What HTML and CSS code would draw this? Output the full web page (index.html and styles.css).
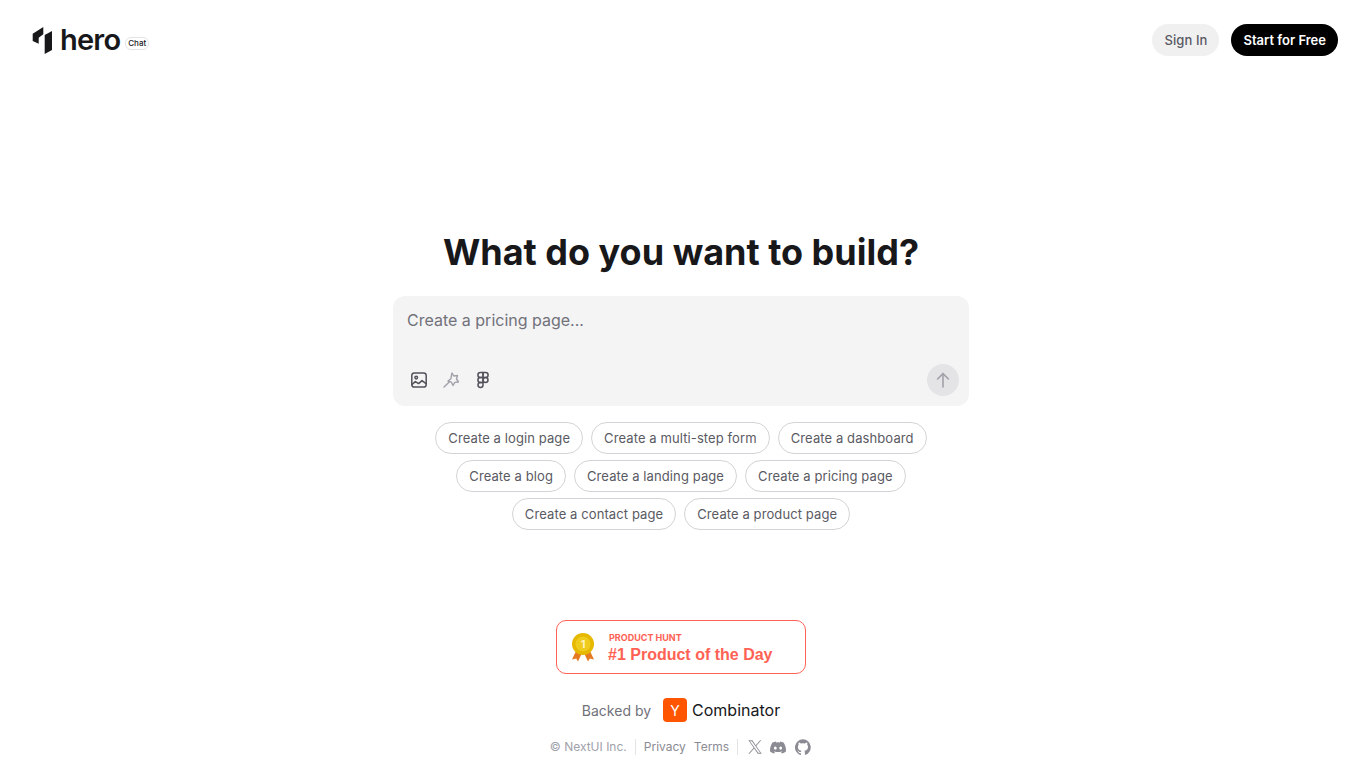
FILE: index.html
```html
<!DOCTYPE html>
<html lang="en">

<head>
    <meta charset="UTF-8">
    <meta name="viewport" content="width=device-width, initial-scale=1.0">
    <title>Hero Chat</title>
    <link rel="stylesheet" href="styles.css">
</head>

<body>

    <header class="top-bar">
        <a class="brand" href="#">
            <svg class="brand-mark" width="20" height="27" viewBox="0 0 20 27" fill="#18181b">
                <path d="M0.700 6.700 11.300 0V7.300L6.700 10.700V16.700L0.700 14Z" />
                <path d="M12.700 8 20 4V23L12.700 27Z" />
            </svg>
            <span class="brand-name">hero</span>
            <span class="brand-tag">Chat</span>
        </a>
        <div class="top-actions">
            <button class="btn btn-light">Sign In</button>
            <button class="btn btn-dark">Start for Free</button>
        </div>
    </header>

    <main class="main">
        <h1 class="title">What do you want to build?</h1>

        <div class="prompt">
            <div class="prompt-text">Create a pricing page...</div>
            <div class="prompt-tools">
                <div class="tool-icons">
                    <svg class="tool" width="20" height="20" viewBox="0 0 20 20" fill="none" stroke="#52525b" stroke-width="1.5" stroke-linecap="round" stroke-linejoin="round">
                        <rect x="2.800" y="3" width="14.400" height="14" rx="2.600" />
                        <circle cx="7.200" cy="7.600" r="1.300" />
                        <path d="M3 14.400 6.400 11.600 9.600 13.600 13 10.600 17 13.600" />
                    </svg>
                    <svg class="tool" width="20" height="20" viewBox="0 0 20 20" fill="none" stroke="#a1a1aa" stroke-width="1.400" stroke-linecap="round" stroke-linejoin="round">
                        <path d="M11 3 12.800 6 16.500 5.500 15.500 9 17.500 12 13.800 12.400 12 15.500 10.400 12.200 7 11 9.800 8.800Z" />
                        <path d="M8 12.200 3 17" />
                    </svg>
                    <svg class="tool" width="20" height="20" viewBox="0 0 20 20" fill="none" stroke="#52525b" stroke-width="1.500" stroke-linejoin="round">
                        <path d="M10 2.500H7.400a2.500 2.500 0 0 0 0 5H10Z" />
                        <path d="M10 2.500h2.600a2.500 2.500 0 0 1 0 5H10Z" />
                        <path d="M10 7.500H7.400a2.500 2.500 0 0 0 0 5H10Z" />
                        <circle cx="12.500" cy="10" r="2.500" />
                        <path d="M10 12.500H7.400A2.500 2.500 0 1 0 10 15Z" />
                    </svg>
                </div>
                <button class="send-btn">
                    <svg width="18" height="18" viewBox="0 0 18 18" fill="none" stroke="#a1a1aa" stroke-width="1.600" stroke-linecap="round" stroke-linejoin="round">
                        <path d="M9 16V2.600" />
                        <path d="M3.600 8 9 2.600 14.400 8" />
                    </svg>
                </button>
            </div>
        </div>

        <div class="chips">
            <button class="chip">Create a login page</button>
            <button class="chip">Create a multi-step form</button>
            <button class="chip">Create a dashboard</button>
            <button class="chip">Create a blog</button>
            <button class="chip">Create a landing page</button>
            <button class="chip">Create a pricing page</button>
            <button class="chip">Create a contact page</button>
            <button class="chip">Create a product page</button>
        </div>
    </main>

    <footer class="bottom">
        <a class="ph-badge" href="#">
            <svg width="24" height="30" viewBox="0 0 24 30">
                <path d="M6 17 1 27.500 5.200 26.600 7 29.600 11 21Z" fill="#e57a22" />
                <path d="M18 17 23 27.500 18.800 26.600 17 29.600 13 21Z" fill="#e57a22" />
                <circle cx="12" cy="12" r="11" fill="#e6b800" />
                <circle cx="12" cy="12" r="7.600" fill="#eecb1c" />
                <text class="medal-num" x="12" y="16" text-anchor="middle">1</text>
            </svg>
            <div class="ph-text">
                <div class="ph-small">PRODUCT HUNT</div>
                <div class="ph-big">#1 Product of the Day</div>
            </div>
        </a>

        <div class="backed">
            <span class="backed-label">Backed by</span>
            <span class="yc-logo">Y</span>
            <span class="yc-name">Combinator</span>
        </div>

        <div class="legal">
            <span class="legal-copy">© NextUI Inc.</span>
            <span class="legal-links">
                <a href="#">Privacy</a>
                <a href="#">Terms</a>
            </span>
            <span class="legal-social">
                <svg width="14" height="14" viewBox="0 0 24 24" fill="#8b8b94">
                    <path d="M14.200 10.200 22.700 0.500H20.700L13.300 8.900 7.500 0.500H0.700L9.600 13.400 0.700 23.500H2.700L10.500 14.700 16.700 23.500H23.500ZM3.400 2H6.600L20.800 22H17.600Z" />
                </svg>
                <svg width="16" height="13" viewBox="0 0 24 18" fill="#8b8b94">
                    <path d="M20.300 1.500A19.800 19.800 0 0 0 15.400 0L14.700 1.400A18.400 18.400 0 0 0 9.300 1.400L8.600 0A19.800 19.800 0 0 0 3.700 1.500C0.600 6.100-0.300 10.600 0.100 15A20 20 0 0 0 6.200 18L7.500 15.900 5.500 14.900 6 14.500C9.900 16.300 14.100 16.300 18 14.500L18.500 14.900 16.500 15.900 17.800 18A20 20 0 0 0 23.900 15C24.400 10 23 5.500 20.300 1.500ZM8 12.300C6.800 12.300 5.900 11.200 5.900 9.900S6.800 7.500 8 7.500 10.100 8.600 10.100 9.900 9.200 12.300 8 12.300ZM16 12.300C14.800 12.300 13.900 11.200 13.900 9.900S14.800 7.500 16 7.500 18.100 8.600 18.100 9.900 17.200 12.300 16 12.300Z" />
                </svg>
                <svg class="github-icon" width="16" height="16" viewBox="0 0 24 24" fill="#8b8b94">
                    <path d="M12 .5a12 12 0 0 0-3.800 23.400c.6.100.8-.3.800-.6v-2.100c-3.300.7-4-1.600-4-1.600-.6-1.400-1.400-1.800-1.400-1.800-1.100-.7.100-.7.100-.7 1.200.1 1.800 1.200 1.800 1.200 1.100 1.800 2.800 1.300 3.500 1 .1-.8.400-1.300.8-1.600-2.700-.3-5.500-1.300-5.500-5.900 0-1.300.5-2.400 1.200-3.200-.1-.3-.5-1.500.1-3.200 0 0 1-.3 3.300 1.200a11.500 11.500 0 0 1 6 0c2.300-1.500 3.300-1.200 3.300-1.200.6 1.700.2 2.900.1 3.200.8.800 1.200 1.900 1.200 3.200 0 4.600-2.800 5.600-5.500 5.900.4.400.8 1.100.8 2.200v3.300c0 .3.200.7.800.6A12 12 0 0 0 12 .5Z" />
                </svg>
            </span>
        </div>
    </footer>

</body>

</html>
```

FILE: styles.css
```css
* {
    box-sizing: border-box;
}

body {
    font-family: 'Inter', 'Liberation Sans', sans-serif;
    margin: 0;
    padding: 0;
    background-color: white;
    color: #18181b;
    height: 772px;
    overflow: hidden;
}

a {
    text-decoration: none;
    color: inherit;
}

button {
    font-family: inherit;
    border: none;
    cursor: pointer;
}

.top-bar {
    height: 80px;
    padding: 0 24px 0 32px;
    display: flex;
    align-items: center;
    justify-content: space-between;
}

.brand {
    display: flex;
    align-items: center;
}

.brand-mark {
    margin-right: 8px;
}

.brand-name {
    font-size: 29px;
    font-weight: 600;
    letter-spacing: -0.8px;
    line-height: 32px;
    margin-right: 5px;
}

.brand-tag {
    font-size: 8px;
    font-weight: 500;
    line-height: 9px;
    padding: 1px 2px;
    border: 1px solid #e4e4e7;
    border-radius: 6px;
    margin-top: 6px;
}

.top-actions {
    display: flex;
    gap: 12px;
}

.btn {
    height: 32px;
    padding: 0 12px;
    border-radius: 16px;
    font-size: 13px;
    font-weight: 500;
}

.btn-light {
    background-color: #f0f0f1;
    color: #5a5a63;
    letter-spacing: 0.1px;
}

.btn-dark {
    background-color: #000;
    color: white;
    font-weight: 600;
}

.main {
    display: flex;
    flex-direction: column;
    align-items: center;
    padding-top: 152px;
}

.title {
    margin: 0 0 24px;
    font-size: 36px;
    line-height: 40px;
    font-weight: 700;
}

.prompt {
    width: 576px;
    height: 110px;
    background-color: #f4f4f5;
    border-radius: 12px;
    padding: 14px 10px 10px 14px;
    display: flex;
    flex-direction: column;
    justify-content: space-between;
}

.prompt-text {
    font-size: 16px;
    line-height: 20px;
    color: #71717a;
}

.prompt-tools {
    display: flex;
    align-items: center;
    justify-content: space-between;
}

.tool-icons {
    display: flex;
    gap: 12px;
    padding-left: 2px;
}

.send-btn {
    width: 32px;
    height: 32px;
    border-radius: 50%;
    background-color: #e4e4e7;
    padding: 0;
    display: flex;
    align-items: center;
    justify-content: center;
}

.chips {
    width: 576px;
    margin-top: 16px;
    display: flex;
    flex-wrap: wrap;
    justify-content: center;
    gap: 6px 8px;
}

.chip {
    height: 32px;
    padding: 0 12px;
    border: 1px solid #d4d4d8;
    border-radius: 16px;
    background-color: white;
    font-size: 13px;
    letter-spacing: 0.1px;
    color: #5a5a63;
}

.bottom {
    display: flex;
    flex-direction: column;
    align-items: center;
    margin-top: 90px;
}

.ph-badge {
    width: 250px;
    height: 54px;
    border: 1px solid #ff6154;
    border-radius: 10px;
    display: flex;
    align-items: center;
    padding: 0 0 0 14px;
    gap: 13px;
    color: #ff6154;
}

.medal-num {
    font-family: 'Inter', sans-serif;
    font-size: 11px;
    font-weight: 700;
    fill: #fff3c0;
}

.ph-text {
    padding-top: 2px;
}

.ph-small {
    font-size: 9px;
    font-weight: 700;
    line-height: 11px;
    margin-left: 1px;
}

.ph-big {
    font-family: 'Liberation Sans', sans-serif;
    font-size: 16px;
    font-weight: 700;
    line-height: 20px;
    margin-top: 2px;
}

.backed {
    display: flex;
    align-items: center;
    margin-top: 24px;
    height: 24px;
}

.backed-label {
    font-size: 14px;
    color: #71717a;
    margin-right: 12px;
}

.yc-logo {
    width: 24px;
    height: 24px;
    border-radius: 4px;
    background-color: #ff5500;
    color: white;
    font-size: 14px;
    display: flex;
    align-items: center;
    justify-content: center;
    margin-right: 5px;
}

.yc-name {
    font-size: 16px;
}

.legal {
    display: flex;
    align-items: center;
    margin-top: 17px;
    padding-right: 1px;
    font-size: 12px;
    color: #a1a1aa;
    height: 16px;
}

.legal-copy {
    padding-right: 8px;
    border-right: 1px solid #e4e4e7;
    line-height: 16px;
}

.legal-links {
    display: flex;
    gap: 8px;
    padding: 0 8px;
    border-right: 1px solid #e4e4e7;
    line-height: 16px;
    color: #8b8b94;
}

.legal-social {
    display: flex;
    align-items: center;
    gap: 8px;
    padding-left: 10px;
}

.github-icon {
    margin-left: 1px;
}
```
